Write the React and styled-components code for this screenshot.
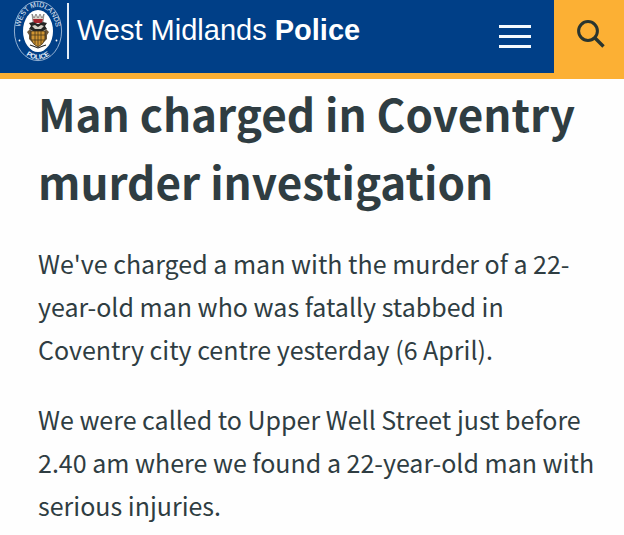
import React from 'react';
import styled, { createGlobalStyle } from 'styled-components';

const GlobalStyle = createGlobalStyle`
  * { box-sizing: border-box; }
  body {
    margin: 0;
    background: #fefefe;
    color: #2f3d42;
    font-family: "Noto Sans CJK SC", "Noto Sans", sans-serif;
  }
`;

const Header = styled.header`
  display: flex;
  height: 79px;
  background: #003f87;
  border-bottom: 6px solid #fcb034;
`;

const Brand = styled.a`
  display: flex;
  align-items: flex-start;
  flex: 1;
  padding: 0 0 0 13px;
  color: #fff;
  text-decoration: none;
`;

const CrestIcon = styled.svg`
  flex: none;
  width: 50px;
  height: 62px;
`;

const Divider = styled.span`
  width: 2px;
  height: 56px;
  margin: 3px 8px 0 4px;
  background: #e4edf7;
`;

const BrandName = styled.span`
  font: 29px/32px "Liberation Sans", Arial, sans-serif;
  white-space: nowrap;
  margin-top: 14px;
`;

const IconButton = styled.button`
  display: flex;
  align-items: center;
  justify-content: center;
  flex: none;
  width: ${({ $wide }) => ($wide ? '78px' : '70px')};
  padding: 0;
  border: 0;
  background: transparent;
  cursor: pointer;
`;

const SearchButton = styled(IconButton)`
  height: 79px;
  background: #fcb034;
  padding: 0 0 12px 4px;
`;

const Article = styled.main`
  padding: 0 24px 0 38px;
`;

const Title = styled.h1`
  margin: 0 0 27px;
  font-size: 44px;
  line-height: 68px;
  font-weight: 700;
`;

const Paragraph = styled.p`
  margin: 0 0 27px;
  font-size: 25px;
  line-height: 43px;
`;

function Crest() {
  return (
    <CrestIcon viewBox="0 0 50 62" role="img" aria-label="West Midlands Police crest">
      <defs>
        <path id="crest-top" d="M7.6 37.2 A18 24 0 1 1 42.4 37.2" />
        <path id="crest-bottom" d="M5 43 A22 28 0 0 0 45 43" />
      </defs>
      <ellipse cx="25" cy="31" rx="23.6" ry="29.6" fill="none" stroke="#b9cde5" strokeWidth="0.8" />
      <ellipse cx="25" cy="31" rx="15" ry="21" fill="#fff" />
      <g fill="#eaf2fb" fontFamily="Liberation Sans, Arial, sans-serif" fontSize="7" textAnchor="middle">
        <text><textPath href="#crest-top" startOffset="50%">WEST MIDLANDS</textPath></text>
        <text fontWeight="700"><textPath href="#crest-bottom" startOffset="50%">POLICE</textPath></text>
      </g>
      <circle cx="6.5" cy="40.5" r="0.9" fill="#fff" />
      <circle cx="43.5" cy="40.5" r="0.9" fill="#fff" />
      <path d="M19 14l2 4 2-4 2 4 2-4 2 4 2-4-1 8H20z" fill="#d9d2c6" stroke="#555" strokeWidth="0.6" />
      <path d="M20 19h10l-1 4h-8z" fill="#a5242d" />
      <path d="M16 23l4-1 5 2 5-2 4 1-2 3 2 3-4 2h-10l-4-2 2-3z" fill="#252523" />
      <path d="M19 26l3-1 3 2 3-2 3 1-3 3h-6z" fill="#d6d0c5" />
      <path d="M14 32l3-3 2 3h12l2-3 3 3-2 3v4l-3 3H19l-3-3v-4z" fill="#6b563a" />
      <path d="M18 31h14v8q-1 5-7 8q-6-3-7-8z" fill="#cf9433" stroke="#302719" strokeWidth="0.8" />
      <path d="M18 35h14M19 40h12M22 31v13M25 31v15M28 31v13" stroke="#493719" strokeWidth="0.8" />
      <path d="M17 45l3 1 5 2 5-2 3-1" fill="none" stroke="#222" strokeWidth="1.1" />
    </CrestIcon>
  );
}

export default function App() {
  return (
    <>
      <GlobalStyle />
      <Header>
        <Brand href="#">
          <Crest />
          <Divider />
          <BrandName>West Midlands <b>Police</b></BrandName>
        </Brand>
        <IconButton $wide aria-label="Menu">
          <svg width="32" height="24" viewBox="0 0 32 24" aria-hidden="true">
            <path d="M0 1.5h32M0 11.5h32M0 21.5h32" stroke="#f5faff" strokeWidth="3" />
          </svg>
        </IconButton>
        <SearchButton aria-label="Search">
          <svg width="30" height="30" viewBox="0 0 30 30" fill="none" stroke="#29352f" aria-hidden="true">
            <circle cx="12" cy="12" r="9.4" strokeWidth="3" />
            <path d="M18.5 18.5l9 9" strokeWidth="3.4" />
          </svg>
        </SearchButton>
      </Header>
      <Article>
        <Title>Man charged in Coventry murder investigation</Title>
        <Paragraph>
          We've charged a man with the murder of a 22-year-old man who was fatally stabbed in Coventry city centre yesterday (6 April).
        </Paragraph>
        <Paragraph>
          We were called to Upper Well Street just before 2.40 am where we found a 22-year-old man with serious injuries.
        </Paragraph>
      </Article>
    </>
  );
}
